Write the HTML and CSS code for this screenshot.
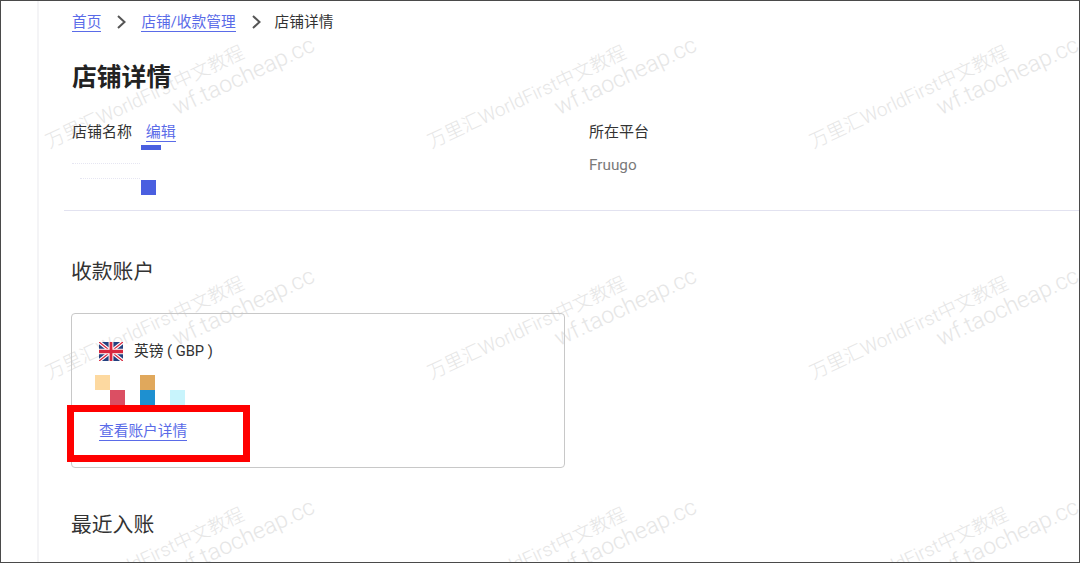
FILE: index.html
```html
<!DOCTYPE html>
<html lang="zh-CN">
<head>
    <meta charset="UTF-8">
    <title>店铺详情</title>
    <link rel="stylesheet" href="styles.css">
</head>
<body>
    <div class="frame">
        <div class="watermarks">
            <div class="mark"><p>万里汇WorldFirst中文教程</p><p class="mark-url">wf.taocheap.cc</p></div>
            <div class="mark"><p>万里汇WorldFirst中文教程</p><p class="mark-url">wf.taocheap.cc</p></div>
            <div class="mark"><p>万里汇WorldFirst中文教程</p><p class="mark-url">wf.taocheap.cc</p></div>
            <div class="mark"><p>万里汇WorldFirst中文教程</p><p class="mark-url">wf.taocheap.cc</p></div>
            <div class="mark"><p>万里汇WorldFirst中文教程</p><p class="mark-url">wf.taocheap.cc</p></div>
            <div class="mark"><p>万里汇WorldFirst中文教程</p><p class="mark-url">wf.taocheap.cc</p></div>
            <div class="mark"><p>万里汇WorldFirst中文教程</p><p class="mark-url">wf.taocheap.cc</p></div>
            <div class="mark"><p>万里汇WorldFirst中文教程</p><p class="mark-url">wf.taocheap.cc</p></div>
            <div class="mark"><p>万里汇WorldFirst中文教程</p><p class="mark-url">wf.taocheap.cc</p></div>
        </div>

        <div class="sidebar"></div>
        <div class="content">
            <nav class="breadcrumb">
                <a href="#">首页</a>
                <svg class="crumb-arrow" viewBox="0 0 10 14"><path d="M2 1 8.5 7 2 13" /></svg>
                <a href="#">店铺/收款管理</a>
                <svg class="crumb-arrow" viewBox="0 0 10 14"><path d="M2 1 8.5 7 2 13" /></svg>
                <span>店铺详情</span>
            </nav>

            <h1 class="page-title">店铺详情</h1>

            <div class="shop-info">
                <div class="info-name">
                    <div class="info-label">店铺名称 <a href="#" class="edit-link">编辑</a></div>
                    <div class="mask-line"></div>
                    <div class="mask-dots"></div>
                    <div class="mask-dots short"></div>
                    <div class="mask-block"></div>
                </div>
                <div class="info-platform">
                    <div class="info-label">所在平台</div>
                    <div class="info-value">Fruugo</div>
                </div>
            </div>

            <h2 class="section-title">收款账户</h2>

            <div class="account-card">
                <div class="currency">
                    <svg class="flag" viewBox="0 0 60 40" preserveAspectRatio="none">
                        <rect width="60" height="40" fill="#23407f" />
                        <path d="M0 0 60 40M60 0 0 40" stroke="#fff" stroke-width="8" />
                        <path d="M0 0 60 40M60 0 0 40" stroke="#d8283f" stroke-width="3" />
                        <path d="M30 0V40M0 20H60" stroke="#fff" stroke-width="12" />
                        <path d="M30 0V40M0 20H60" stroke="#d8283f" stroke-width="7" />
                    </svg>
                    <span>英镑 ( GBP )</span>
                </div>
                <div class="mosaic">
                    <i class="c1"></i><i></i><i></i><i class="c2"></i><i></i><i></i>
                    <i></i><i class="c3"></i><i></i><i class="c4"></i><i></i><i class="c5"></i>
                </div>
                <a href="#" class="account-link">查看账户详情</a>
                <div class="highlight-box"></div>
            </div>

            <h2 class="section-title recent">最近入账</h2>
        </div>
    </div>
</body>
</html>
```

FILE: styles.css
```css
* {
    box-sizing: border-box;
}

html, body {
    height: 100%;
}

body {
    margin: 0;
    font-family: Roboto, "Noto Sans CJK SC", sans-serif;
    font-size: 14.7px;
    color: #333;
    background-color: #fff;
}

a {
    color: #5a6be8;
    text-decoration: none;
    border-bottom: 1px solid #5a6be8;
}

.frame {
    position: relative;
    display: flex;
    height: 563px;
    overflow: hidden;
    border: 1px solid #4a4a4a;
}

.sidebar {
    position: relative;
    flex: none;
    width: 38px;
    border-right: 2px solid #f4f4f6;
}

.content {
    position: relative;
    flex: 1;
    padding: 11px 0 0 25px;
}

.breadcrumb {
    display: flex;
    align-items: center;
    gap: 15px;
    padding-left: 8px;
    height: 20px;
    line-height: 18px;
}

.breadcrumb span {
    margin-left: -1px;
    color: #333;
}

.crumb-arrow {
    width: 10px;
    height: 14px;
    fill: none;
    stroke: #555;
    stroke-width: 2;
}

.page-title {
    margin: 19px 0 0 8px;
    font-size: 24.8px;
    line-height: 54px;
    font-weight: 700;
    color: #222;
}

.shop-info {
    display: flex;
    height: 106px;
    padding: 17px 0 0 8px;
    border-bottom: 1px solid #e2e2f0;
}

.info-name {
    width: 517px;
}

.info-label {
    font-size: 15px;
    line-height: 20px;
    color: #333;
}

.edit-link {
    margin-left: 10px;
}

.info-value {
    margin-top: 13px;
    font-size: 15.3px;
    line-height: 20px;
    color: #7a7a7a;
}

.mask-line {
    width: 20px;
    height: 5px;
    margin: 3px 0 0 69px;
    background-color: #4a5fe0;
}

.mask-dots {
    width: 68px;
    height: 1px;
    margin-top: 13px;
    border-top: 1px dotted #e6e6f2;
}

.mask-dots.short {
    width: 60px;
    margin: 14px 0 0 8px;
}

.mask-block {
    width: 15px;
    height: 15px;
    margin: 1px 0 0 69px;
    background-color: #4a5fe0;
}

.section-title {
    margin: 48px 0 0 7px;
    font-size: 20.8px;
    line-height: 26px;
    font-weight: 400;
    color: #333;
}

.account-card {
    position: relative;
    width: 494px;
    height: 155px;
    margin: 28px 0 0 7px;
    padding: 27px 0 0 27px;
    border: 1px solid #c8c8c8;
    border-radius: 4px;
}

.currency {
    display: flex;
    align-items: center;
    gap: 11px;
    height: 20px;
    line-height: 20px;
}

.flag {
    width: 24px;
    height: 19px;
}

.mosaic {
    display: grid;
    grid-template-columns: repeat(6, 15px);
    grid-auto-rows: 15px;
    margin: 14px 0 0 -4px;
}

.mosaic .c1 { background-color: #fdd9a0; }
.mosaic .c2 { background-color: #e0a85c; }
.mosaic .c3 { background-color: #db4f63; }
.mosaic .c4 { background-color: #1e90d0; }
.mosaic .c5 { background-color: #c8f4fc; }

.account-link {
    display: inline-block;
    margin-top: 17px;
    line-height: 18px;
}

.highlight-box {
    position: absolute;
    left: -5px;
    top: 91px;
    width: 183px;
    height: 57px;
    border: 7px solid #f00;
}

.recent {
    margin-top: 44px;
}

/* watermark layer, under the page text */
.watermarks {
    position: absolute;
    left: 0;
    top: 0;
    display: grid;
    grid-template-columns: repeat(3, 382px);
    grid-auto-rows: 231px;
    pointer-events: none;
}

.mark {
    position: relative;
    color: #e6e6e6;
    font-weight: 300;
    white-space: nowrap;
}

.mark p {
    position: absolute;
    left: 46px;
    top: 130px;
    margin: 0;
    font-size: 18.8px;
    line-height: 24px;
    transform: rotate(-25deg);
    transform-origin: left center;
}

.mark .mark-url {
    left: 173px;
    top: 96px;
    font-size: 23px;
}
```
